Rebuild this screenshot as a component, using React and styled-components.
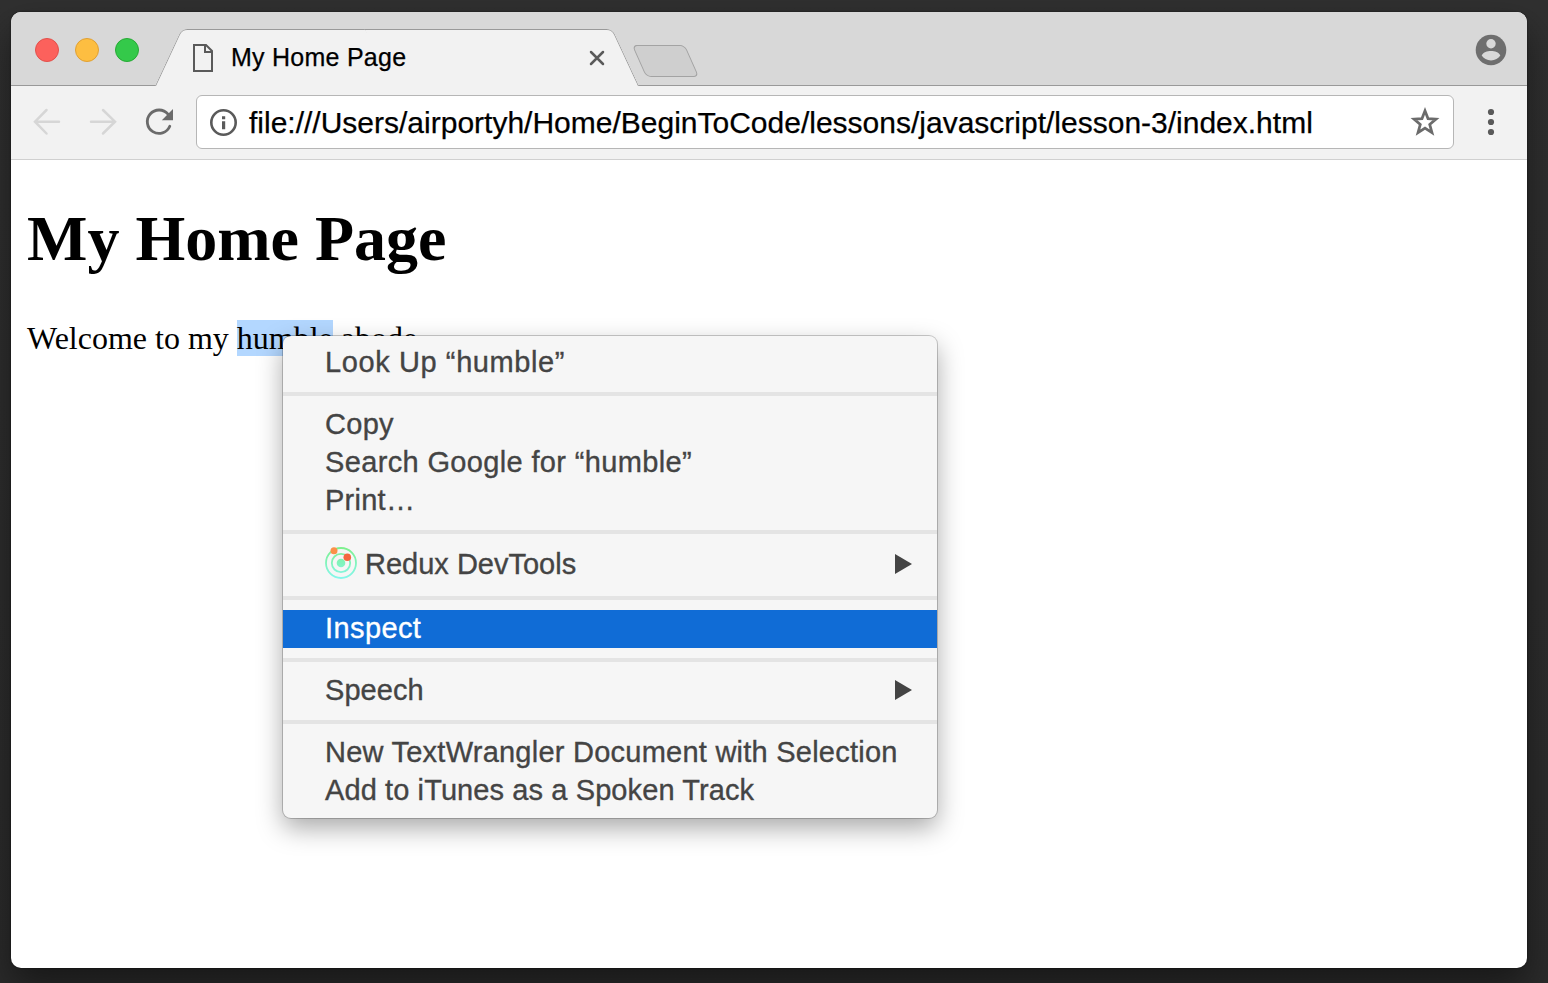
import React from 'react';
import styled, { createGlobalStyle, css } from 'styled-components';

const Global = createGlobalStyle`
  * { box-sizing: border-box; }
  html, body { margin: 0; height: 100%; overflow: hidden; }
  body { background: linear-gradient(#303030, #2b2b2b); font-family: "Liberation Sans", Arial, sans-serif; }
  svg { display: block; flex: none; }
`;

const Desktop = styled.div`
  width: 1548px;
  height: 983px;
  padding: 12px 21px 15px 11px;
  overflow: hidden;
`;

const Window = styled.div`
  position: relative;
  display: flex;
  flex-direction: column;
  height: 956px;
  border-radius: 10px;
  background: #fff;
  box-shadow: 0 0 2px rgba(0, 0, 0, 0.6), 0 18px 36px rgba(0, 0, 0, 0.45);
`;

const TitleBar = styled.header`
  display: flex;
  align-items: flex-start;
  height: 74px;
  padding: 0 21px 0 24px;
  border-bottom: 1px solid #999;
  border-radius: 10px 10px 0 0;
  background: #d8d8d8;
`;

const Lights = styled.div`
  display: flex;
  gap: 16px;
  padding-top: 26px;
`;

const Light = styled.span`
  width: 24px;
  height: 24px;
  border: 1px solid ${(p) => p.$edge};
  border-radius: 50%;
  background: ${(p) => p.$color};
`;

const Tab = styled.div`
  position: relative;
  display: flex;
  align-items: center;
  width: 484px;
  height: 57px;
  margin: 17px 0 0 16px;
  padding: 0 34px 0 37px;
`;

const tabSide = css`
  content: "";
  position: absolute;
  top: 0;
  bottom: 0;
  width: 51%;
  background: #f2f2f2;
  border-top: 1px solid #999;
`;

const TabShape = styled.div`
  position: absolute;
  inset: 0;
  &::before {
    ${tabSide}
    left: 0;
    border-left: 1.5px solid #999;
    border-top-left-radius: 6px;
    transform: skewX(-25deg);
    transform-origin: bottom left;
  }
  &::after {
    ${tabSide}
    right: 0;
    border-right: 1.5px solid #999;
    border-top-right-radius: 6px;
    transform: skewX(25deg);
    transform-origin: bottom right;
  }
`;

const TabTitle = styled.span`
  position: relative;
  flex: 1;
  margin-left: 17px;
  padding-bottom: 2px;
  font-size: 25px;
  line-height: 30px;
  letter-spacing: ${(p) => p.$spacing}px;
  white-space: nowrap;
  color: #000;
  -webkit-text-stroke: 0.25px #000;
`;

const Glyph = styled.svg`
  position: relative;
`;

const NewTab = styled.span`
  width: 53px;
  height: 32px;
  margin: 33px 0 0 0;
  border: 1.5px solid #a3a3a3;
  border-radius: 5px;
  background: #cfcfcf;
  transform: skewX(24deg);
`;

const Account = styled.div`
  margin: 22px -1px 0 auto;
`;

const Toolbar = styled.nav`
  display: flex;
  align-items: center;
  height: 74px;
  padding: 0 20px 2px 20px;
  border-bottom: 1px solid #d0d0d0;
  background: #f2f2f2;
`;

const NavButtons = styled.div`
  display: flex;
  gap: 24px;
  width: 165px;
`;

const AddressBar = styled.div`
  display: flex;
  align-items: center;
  width: 1258px;
  height: 54px;
  padding: 0 10px;
  border: 1px solid #b6b6b6;
  border-radius: 6px;
  background: #fff;
`;

const Url = styled.span`
  flex: 1;
  margin-left: 10px;
  padding-top: 2px;
  font-size: 30px;
  line-height: 34px;
  white-space: nowrap;
  color: #000;
  -webkit-text-stroke: 0.25px #000;
`;

const MoreButton = styled.div`
  margin-left: 21px;
`;

const Page = styled.main`
  flex: 1;
  padding: 43px 16px;
  font-family: "Liberation Serif", "Times New Roman", serif;
  color: #000;
`;

const Heading = styled.h1`
  margin: 0 0 46px;
  font-size: 64px;
  line-height: 72px;
  font-weight: bold;
  white-space: nowrap;
`;

const Paragraph = styled.p`
  margin: 0;
  font-size: 32px;
  line-height: 34px;
  white-space: nowrap;
`;

const Selection = styled.span`
  background: #b3d7ff;
`;

const Menu = styled.div`
  position: absolute;
  left: 272px;
  top: 324px;
  width: 654px;
  padding: 8px 0;
  border-radius: 8px;
  background: #f6f6f6;
  box-shadow: 0 0 0 1px rgba(0, 0, 0, 0.2), 0 10px 26px rgba(0, 0, 0, 0.34);
`;

const MenuItem = styled.div`
  display: flex;
  align-items: center;
  height: ${(p) => (p.$tall ? 42 : 38)}px;
  padding: 0 25px ${(p) => (p.$tall ? 2 : 0)}px 42px;
  background: ${(p) => (p.$active ? '#106cd6' : 'transparent')};
  color: ${(p) => (p.$active ? '#fff' : '#444')};
  font-size: 29px;
  line-height: 38px;
  white-space: nowrap;
  -webkit-text-stroke: 0.35px currentColor;
`;

const Label = styled.span`
  flex: 1;
  margin-top: ${(p) => (p.$tall ? 0 : -2)}px;
  letter-spacing: ${(p) => p.$spacing}px;
`;

const Separator = styled.div`
  height: 4px;
  margin: 10px 0;
  background: #e4e4e4;
`;

const AppIcon = styled.span`
  margin: 0 8px 2px 0;
`;

const SubmenuMark = styled.span`
  margin-bottom: ${(p) => (p.$tall ? 0 : 2)}px;
`;

const groups = [
  [{ text: 'Look Up “humble”', spacing: 0.6 }],
  [
    { text: 'Copy', spacing: 0.3 },
    { text: 'Search Google for “humble”', spacing: 0.35 },
    { text: 'Print…', spacing: 0.25 },
  ],
  [{ text: 'Redux DevTools', spacing: 0, icon: true, sub: true }],
  [{ text: 'Inspect', spacing: 0.4, active: true }],
  [{ text: 'Speech', spacing: 0.05, sub: true }],
  [
    { text: 'New TextWrangler Document with Selection', spacing: 0.24 },
    { text: 'Add to iTunes as a Spoken Track', spacing: 0.1 },
  ],
];

function FileIcon() {
  return (
    <Glyph width="22" height="30" viewBox="0 0 22 30" fill="none" stroke="#5a5a5a" strokeWidth="2">
      <path d="M2 2H14L20 8V28H2Z" />
      <path d="M13 2V9H20" />
    </Glyph>
  );
}

function CloseIcon() {
  return (
    <Glyph width="16" height="16" viewBox="0 0 16 16" stroke="#5a5a5a" strokeWidth="2.5" strokeLinecap="round">
      <path d="M2 2L14 14M14 2L2 14" />
    </Glyph>
  );
}

function ArrowIcon({ forward }) {
  return (
    <svg width="32" height="32" viewBox="0 0 32 32" fill="none" stroke="#d6d6d6" strokeWidth="2.5" strokeLinecap="round">
      <path d={forward ? 'M16 4L28 15.7L16 27.5M27.5 15.7H4' : 'M15.5 4L4 15.7L15.5 27.5M4.5 15.7H28'} />
    </svg>
  );
}

function ReloadIcon() {
  return (
    <svg width="32" height="32" viewBox="0 0 32 32">
      <path d="M25 8.2A11.7 11.7 0 1 0 26.8 20.3" fill="none" stroke="#6b6b6b" strokeWidth="2.8" strokeLinecap="round" />
      <path d="M30 3V14.2H18.8Z" fill="#6b6b6b" />
    </svg>
  );
}

function InfoIcon() {
  return (
    <svg width="32" height="32" viewBox="0 0 32 32">
      <circle cx="16.5" cy="16.5" r="12.2" fill="none" stroke="#5a5a5a" strokeWidth="2.6" />
      <path d="M15 10.2h3.2v3h-3.2zM15 15.2h3.2v8h-3.2z" fill="#5a5a5a" />
    </svg>
  );
}

function StarIcon() {
  return (
    <svg width="35" height="35" viewBox="0 0 35 35">
      <path
        d="M17 6.7L20 14.6L28 15.1L21.7 20.4L24 28.7L17 24.1L10 28.7L12.3 20.4L6 15.1L14 14.6Z"
        fill="none"
        stroke="#6b6b6b"
        strokeWidth="2.7"
      />
    </svg>
  );
}

function AccountIcon() {
  return (
    <svg width="32" height="32" viewBox="0 0 32 32">
      <circle cx="16" cy="16" r="15.3" fill="#6e6e6e" />
      <circle cx="16" cy="9.8" r="4.7" fill="#d8d8d8" />
      <path d="M6.7 21.6C8.5 18 12 17 16 17S23.5 18 25.3 21.6C23.5 24.5 20 26.5 16 26.5S8.5 24.5 6.7 21.6Z" fill="#d8d8d8" />
    </svg>
  );
}

function MoreIcon() {
  return (
    <svg width="32" height="32" viewBox="0 0 32 32" fill="#5a5a5a">
      <circle cx="16" cy="6" r="3.1" />
      <circle cx="16" cy="16" r="3.1" />
      <circle cx="16" cy="26" r="3.1" />
    </svg>
  );
}

function ReduxIcon() {
  return (
    <svg width="32" height="32" viewBox="0 0 32 32">
      <defs>
        <linearGradient id="orbit" x1="0" y1="0" x2="0" y2="32" gradientUnits="userSpaceOnUse">
          <stop offset="0" stopColor="#7df08a" />
          <stop offset="1" stopColor="#85f7ee" />
        </linearGradient>
      </defs>
      <g fill="none" stroke="url(#orbit)" strokeWidth="1.8">
        <circle cx="16" cy="16" r="15" />
        <circle cx="16" cy="16" r="9.2" />
      </g>
      <circle cx="16" cy="16" r="4.3" fill="url(#orbit)" />
      <circle cx="9" cy="3.7" r="3.5" fill="#fb9148" />
      <circle cx="22.3" cy="10.2" r="3.8" fill="#f5673f" />
    </svg>
  );
}

function SubmenuArrow() {
  return (
    <svg width="17" height="20" viewBox="0 0 17 20">
      <path d="M0 0L17 10L0 20Z" fill="#444" />
    </svg>
  );
}

export default function App() {
  return (
    <>
      <Global />
      <Desktop>
        <Window>
          <TitleBar>
            <Lights>
              <Light $color="#fc615c" $edge="#e2504b" />
              <Light $color="#fdbe41" $edge="#e0a033" />
              <Light $color="#34c94a" $edge="#27aa35" />
            </Lights>
            <Tab>
              <TabShape />
              <FileIcon />
              <TabTitle $spacing={0.25}>My Home Page</TabTitle>
              <CloseIcon />
            </Tab>
            <NewTab />
            <Account>
              <AccountIcon />
            </Account>
          </TitleBar>
          <Toolbar>
            <NavButtons>
              <ArrowIcon />
              <ArrowIcon forward />
              <ReloadIcon />
            </NavButtons>
            <AddressBar>
              <InfoIcon />
              <Url>file:///Users/airportyh/Home/BeginToCode/lessons/javascript/lesson-3/index.html</Url>
              <StarIcon />
            </AddressBar>
            <MoreButton>
              <MoreIcon />
            </MoreButton>
          </Toolbar>
          <Page>
            <Heading>My Home Page</Heading>
            <Paragraph>
              Welcome to my <Selection>humble</Selection> abode.
            </Paragraph>
          </Page>
          <Menu>
            {groups.map((items, i) => (
              <React.Fragment key={i}>
                {i > 0 && <Separator />}
                {items.map((item) => (
                  <MenuItem key={item.text} $active={item.active} $tall={item.icon}>
                    {item.icon && (
                      <AppIcon>
                        <ReduxIcon />
                      </AppIcon>
                    )}
                    <Label $spacing={item.spacing} $tall={item.icon}>{item.text}</Label>
                    {item.sub && (
                      <SubmenuMark $tall={item.icon}>
                        <SubmenuArrow />
                      </SubmenuMark>
                    )}
                  </MenuItem>
                ))}
              </React.Fragment>
            ))}
          </Menu>
        </Window>
      </Desktop>
    </>
  );
}
